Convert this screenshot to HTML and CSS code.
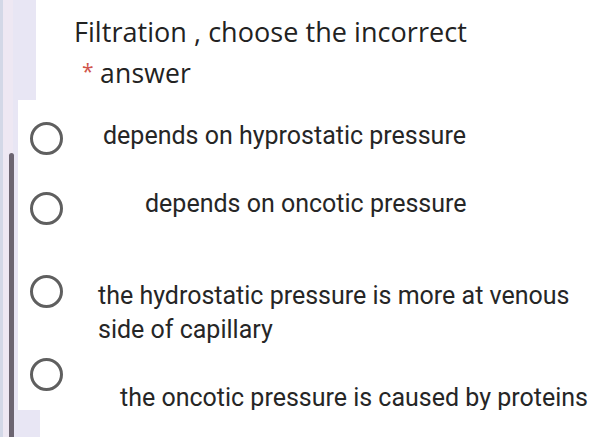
FILE: index.html
```html
<!DOCTYPE html>
<html lang="en">
<head>
<meta charset="utf-8">
<title>Filtration question</title>
<link rel="stylesheet" href="styles.css">
</head>
<body>
<div class="page">
  <div class="scroll-bar"></div>
  <section class="q-card">
    <h1 class="q-title">Filtration , choose the incorrect</h1>
    <p class="q-sub"><span class="req">*</span><span class="q-word">answer</span></p>
  </section>
  <section class="opt-card">
    <div class="option opt-1">
      <span class="radio"></span>
      <span class="opt-text">depends on hyprostatic pressure</span>
    </div>
    <div class="option opt-2">
      <span class="radio"></span>
      <span class="opt-text">depends on oncotic pressure</span>
    </div>
    <div class="option opt-3">
      <span class="radio"></span>
      <span class="opt-text">the hydrostatic pressure is more at venous<br>side of capillary</span>
    </div>
    <div class="option opt-4">
      <span class="radio"></span>
      <span class="opt-text">the oncotic pressure is caused by proteins</span>
    </div>
  </section>
  <section class="next-card"></section>
</div>
</body>
</html>
```

FILE: styles.css
```css
html, body {
  margin: 0;
  padding: 0;
}
body {
  width: 614px;
  height: 437px;
  overflow: hidden;
  background: linear-gradient(to right, #d3d8e7 0 3px, #eee8f3 3px 13px, #e8e6f4 13px);
  font-family: Roboto, "Liberation Sans", sans-serif;
  color: #262626;
}
.page {
  position: relative;
  display: flex;
  flex-direction: column;
  height: 437px;
}
.scroll-bar {
  position: absolute;
  left: 9px;
  top: 153px;
  width: 5px;
  height: 300px;
  border-radius: 3px 3px 0 0;
  background: #6c6571;
}
.q-card {
  margin-left: 36px;
  height: 100px;
  background: #ffffff;
  padding-left: 38px;
  box-sizing: border-box;
  padding-top: 15px;
  font-family: "Open Sans", Roboto, sans-serif;
}
.q-title {
  margin: 0;
  font-weight: 400;
  font-size: 27px;
  line-height: 34px;
  color: #222222;
  letter-spacing: 0.05px;
}
.q-sub {
  margin: 9px 0 0 8px;
  font-size: 26.5px;
  line-height: 30px;
  display: flex;
  align-items: flex-start;
}
.req {
  color: #d0544c;
  font-size: 21px;
  line-height: 20px;
  margin-top: 3px;
  width: 18px;
}
.q-word {
  color: #222222;
  letter-spacing: 0.2px;
}
.opt-card {
  margin-left: 18px;
  height: 310px;
  background: #ffffff;
  padding-top: 18px;
  box-sizing: border-box;
}
.next-card {
  margin-left: 40px;
  flex: 1;
  background: #ffffff;
}
.option {
  display: flex;
  align-items: flex-start;
}
.radio {
  flex: none;
  width: 27px;
  height: 27px;
  border: 3px solid #5f5f5f;
  border-radius: 50%;
  margin-left: 11.5px;
}
.opt-text {
  font-size: 25px;
  line-height: 34px;
  color: #262626;
}
.opt-1 { height: 68px; }
.opt-1 .radio { margin-top: 4px; }
.opt-1 .opt-text { margin-left: 40.5px; margin-top: 1px; }
.opt-2 { height: 89px; }
.opt-2 .radio { margin-top: 6px; }
.opt-2 .opt-text { margin-left: 82.5px; margin-top: 1px; }
.opt-3 { height: 83px; }
.opt-3 .radio { margin-top: 0; }
.opt-3 .opt-text { margin-left: 35.5px; margin-top: 4px; }
.opt-4 .radio { margin-top: 0; }
.opt-4 .opt-text { margin-left: 57.5px; margin-top: 23px; }
```
